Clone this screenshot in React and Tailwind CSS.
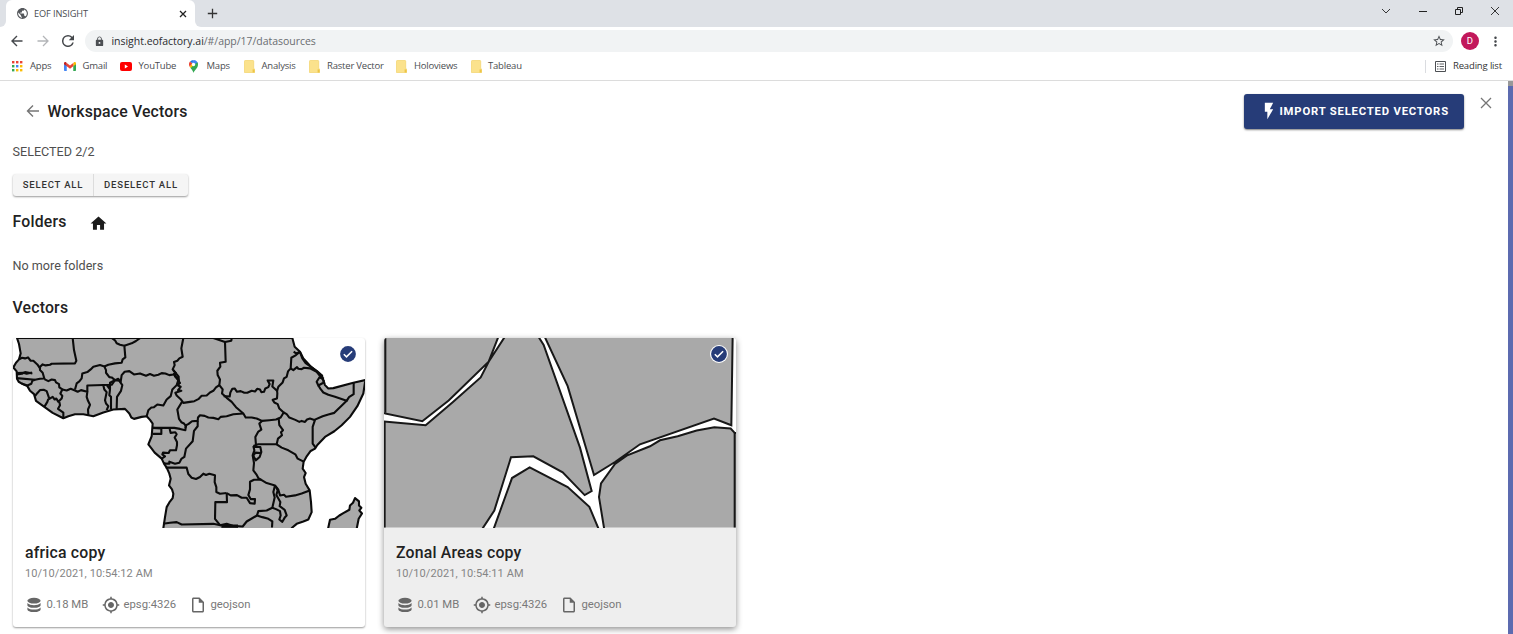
import React from "react";
import {
  MdHome, MdFlashOn, MdLock,
  MdStarBorder, MdMoreVert, MdMyLocation, MdOutlineInsertDriveFile, MdPublic,
} from "react-icons/md";

const AFRICA_BORDERS = [
  "57,88 66,83 75,85 84,82 92,92 100,92 112,103 118,112 128,103 137,106 150,104 155,101 225,100 229,92 222,60 218,24",
  "120,110 120,120 128,128 133,145 120,146 105,149 50,144",
  "50,133 66,131 75,126 87,128 97,130",
  "50,129 70,128 80,131 96,127",
  "105,149 97,152 94,161 82,166 65,160",
  "133,147 145,153 155,148 165,150 168,157 177,162 178,172 187,178 181,190 187,197 185,205 175,215 169,205 164,208 158,200 148,206 145,197 140,183 131,179 120,180 111,190 105,198",
  "145,206 142,215 133,230",
  "178,215 180,225 174,236 190,247 190,262",
  "187,178 200,181 212,176 225,181 233,185 243,180 262,185 260,200 264,212 270,224 264,238 265,254",
  "225,178 230,160 238,154 245,145 247,130 262,126 272,118 280,110 300,105 313,109 318,120 318,128 328,141 335,142 345,150 335,164 262,166 262,185",
  "313,109 325,104 345,100 365,98 368,88 376,82 373,47 360,44 350,40 345,31 335,24",
  "373,47 395,40 408,33 421,24",
  "310,166 313,178 320,186 315,210 318,220 325,228 320,240",
  "321,166 330,178 328,195 333,200 333,238",
  "330,178 330,158 345,150 358,152 367,165 363,182 351,200 350,236",
  "345,150 355,146 362,155 365,135 374,125 388,123 402,133 420,130 438,137 450,132 462,137 475,134 485,129 496,130 508,135 520,133 530,128",
  "550,24 544,55 548,80 538,85 532,92 522,96 524,105 518,118 526,128 525,138 534,145 540,162",
  "520,120 536,140 536,152 527,141 520,130",
  "535,150 530,165 517,178 512,198 500,208 490,226 472,223 462,231 454,232 445,240 440,258",
  "540,155 534,166 542,170 534,180 544,182 526,188 530,196 542,207 550,218 570,215 583,213 595,207 605,197 620,196 630,187 640,182 648,172 658,165",
  "546,215 532,238 537,266 544,276 552,280 558,288 555,293",
  "458,293 505,293 523,293 540,296 556,300 558,285 566,281 576,273 593,272 594,262 600,255 614,257 625,262 640,263 655,267 662,260 680,258 700,252 730,250",
  "458,293 484,295 484,311 458,311",
  "509,296 512,308 526,306 530,312 524,322 531,335 531,345 528,360 510,360 506,368 489,367 487,372 495,378 484,386",
  "490,398 500,400 508,400 508,394 525,400 538,397 544,386 553,380 558,355 578,333 582,302 593,288 593,272",
  "497,412 560,412 565,431 575,442 588,446 600,440 610,430 618,434 628,430 645,435 644,455 649,470 649,485 660,490 680,488",
  "489,580 510,577 530,575 545,582 640,580 665,585",
  "640,24 675,36 694,32 695,24",
  "675,36 677,95 660,98 661,110 652,122 653,135 660,148 658,165 668,178 666,190 680,203 695,215 708,231 730,250 737,262 755,262 770,265 786,272 808,270 828,268 842,262 851,247 838,235 833,222 823,217 818,209 831,205 832,190 831,178",
  "671,198 689,199 691,187 697,176 704,175 711,185 722,183 733,188 742,188 755,182 765,184 772,176 780,178 784,186 792,185 796,175 805,171 809,162 803,151 820,151 817,169 831,182 835,170 848,157 852,145 860,140 864,124 872,115 874,83 888,75 900,65",
  "872,115 880,120 891,111 895,116 905,117 912,113 930,115 950,125 970,150",
  "881,65 888,70 900,66 907,85 917,99 930,108 950,122 968,138",
  "851,247 860,252 868,262 886,269 898,275 905,272 915,275 921,268 930,265 943,269 968,258 985,253 1003,248 1040,212",
  "972,146 958,142 950,155 955,166 970,158 971,149",
  "955,166 962,177 970,187 985,194 1005,200 1040,212 1047,201 1061,192 1061,159",
  "945,269 938,290 938,340 947,352",
  "836,265 838,285 849,300 843,306 846,315 834,325 830,342 775,342 760,347",
  "786,272 778,280 784,298 775,304 766,320 768,345",
  "830,342 845,352 865,360 886,372 893,385 911,394",
  "760,347 763,360 758,375 762,398 760,420 769,432 775,443 782,448 762,448 750,454 750,477 745,494 752,506 765,506 764,520 750,518 740,502 725,502 711,494 692,495 680,488",
  "761,350 781,350 784,365 779,380 767,390 760,376 766,367 784,368",
  "780,446 800,458 825,465 835,478 840,495 852,493 858,499 885,495 905,489 929,480",
  "825,465 820,485 824,501 817,532 800,540 775,542 771,555",
  "828,470 833,480 829,494 841,515 839,527 854,538 860,555 855,560 847,574 838,567 842,555 840,542 828,536 817,532",
  "680,488 681,515 646,515 645,565 660,584 680,580 698,586 728,588 740,573 771,555 787,560 805,565 817,573 816,591",
];

const AFRICA_LAND =
  "51,24 57,42 62,70 57,88 48,98 40,112 50,124 51,146 56,155 68,162 82,168 90,182 102,192 108,212 134,231 158,248 190,264 205,258 225,252 250,252 280,258 310,247 340,238 375,236 388,250 394,262 402,266 425,260 440,258 450,269 458,280 455,318 445,342 455,355 464,367 485,385 492,400 500,412 508,430 512,445 507,465 516,477 520,490 518,503 508,516 500,530 495,560 489,600 870,600 877,591 890,580 910,573 925,567 935,545 933,515 929,480 917,460 912,440 917,428 908,415 911,394 919,380 932,362 945,355 952,344 975,320 1003,303 1025,285 1050,260 1072,228 1090,190 1096,150 1060,158 1000,174 985,175 975,165 967,140 950,124 935,112 910,85 900,65 884,50 877,24";

function AfricaMap() {
  return (
    <svg viewBox="39 24 1056 567" preserveAspectRatio="none" className="block h-[189.5px] w-full">
      <g stroke="#0b0b0b" strokeWidth="6.3" strokeLinejoin="round">
        <polygon points={AFRICA_LAND} fill="#a9a9a9" />
        <polygon points="983,600 990,568 1005,565 1018,555 1030,548 1048,538 1050,525 1059,517 1065,503 1077,513 1077,525 1084,532 1078,540 1086,549 1076,565 1069,600" fill="#a9a9a9" />
        {AFRICA_BORDERS.map((points) => (
          <polyline key={points} points={points} fill="none" />
        ))}
        <path d="M664 587H714" strokeWidth="10" />
      </g>
    </svg>
  );
}

function ZonesMap() {
  return (
    <svg viewBox="12 24 1056 567" preserveAspectRatio="none" className="block h-[189.5px] w-full">
      <rect x="12" y="24" width="1056" height="567" fill="#a9a9a9" />
      <g fill="#fff" stroke="#181818" strokeWidth="6">
        <path d="M5 248 L127 273 L206 211 L326 95 L356 18 L376 18 L326 95 L302 142 L218 216 L137 285 L5 273 Z" />
        <path d="M474 18 L491 45 L600 352 L635 482 L614 494 L548 426 L460 378 L393 381 L343 540 L305 598 L340 598 L396 443 L449 411 L563 470 L628 529 L657 598 L673 598 L657 500 L663 459 L705 401 L740 376 L810 348 L840 330 L893 318 L950 301 L1003 291 L1052 295 L1064 308 L1080 310 L1080 18 L1058 18 L1054 285 L1002 265 L780 342 L705 395 L642 434 L563 168 L493 18 Z" />
        <path d="M16 24V248M14 273V591M1064 308V591" fill="none" />
      </g>
      <path d="M12 253 L14 253 L14 269 L12 269Z" fill="#fff" />
      <path d="M1062 24 H1068 V304 L1062 298 Z" fill="#fff" />
    </svg>
  );
}

function DatabaseIcon() {
  return (
    <svg viewBox="0 0 18 18" className="mr-[3.500px] size-[18px] text-[#666]" fill="currentColor">
      <ellipse cx="9" cy="4.700" rx="6.600" ry="2.900" />
      <path d="M2.400 7.100c1.500 1.700 4 2.100 6.600 2.100s5.100-.4 6.600-2.100v2.100c0 1.500-3 2.600-6.600 2.600s-6.600-1.100-6.600-2.600Z" />
      <path d="M2.400 11.400c1.500 1.700 4 2.100 6.600 2.100s5.100-.4 6.600-2.100v2.100c0 1.500-3 2.600-6.600 2.600s-6.600-1.100-6.600-2.600Z" />
    </svg>
  );
}

function Meta({ icon, className, children }) {
  return (
    <div className={`flex items-center text-[11.3px] text-[#797979] ${className}`}>
      {icon}
      <span className="pt-[1px]">{children}</span>
    </div>
  );
}

function VectorCard({ map, title, date, size, active }) {
  return (
    <article
      className={
        active
          ? "relative h-[289px] w-[352px] overflow-hidden rounded-[3px] bg-[#eeeeee] shadow-[0_2px_6px_rgba(0,0,0,0.45)]"
          : "relative h-[289px] w-[352px] overflow-hidden rounded-[3px] bg-white shadow-[0_1px_2px_rgba(0,0,0,0.4)]"
      }
    >
      {map}
      <svg viewBox="0 0 18 18" className="absolute top-[7px] right-[7.500px] size-[18px]">
        <circle cx="9" cy="9" r="9" fill="#fff" />
        <circle cx="9" cy="9" r="7.900" fill="#263c78" />
        <path d="m4.800 9.200 2.700 2.700 5.600-5.700" fill="none" stroke="#fff" strokeWidth="1.500" />
      </svg>
      <div className="px-[12.500px] pt-[15.500px]">
        <h3 className="h-5 text-[15.8px] leading-5 font-medium tracking-[0.2px] text-[#222]">{title}</h3>
        <p className="mt-[2.500px] h-4 text-[11px] leading-4 tracking-[0.1px] text-[#858585]">{date}</p>
        <div className="mt-[14px] flex h-[18px] items-center">
          <Meta className="w-[76.500px]" icon={<DatabaseIcon />}>{size}</Meta>
          <Meta className="w-[87px]" icon={<MdMyLocation className="mr-[4px] size-[18px] text-[#666]" />}>epsg:4326</Meta>
          <Meta className="" icon={<MdOutlineInsertDriveFile className="mr-[4px] size-[18px] text-[#666]" />}>geojson</Meta>
        </div>
      </div>
    </article>
  );
}

function FolderIcon() {
  return (
    <svg viewBox="0 0 11 13" className="h-[13px] w-[11px]">
      <path d="M.5 1.200Q.5.5 1.200.5H9q.7 0 .7.7v7l1 1v3.300H.5Z" fill="#fbe28c" stroke="#f2d269" strokeWidth=".7" />
      <path d="M8.600 12.500V9.400h2v3.100Z" fill="#edc546" />
    </svg>
  );
}

function AppsIcon() {
  const colors = ["#ea4335", "#ea4335", "#ea4335", "#34a853", "#4285f4", "#fbbc04", "#34a853", "#fbbc04", "#fbbc04"];
  return (
    <svg viewBox="0 0 11 11" className="size-[11px]">
      {colors.map((c, i) => (
        <rect key={i} x={(i % 3) * 4} y={Math.floor(i / 3) * 4} width="2.400" height="2.400" fill={c} />
      ))}
    </svg>
  );
}

function GmailIcon() {
  return (
    <svg viewBox="0 0 24 18" className="h-[9px] w-[12px]">
      <path d="M0 3V16.500q0 1.500 1.600 1.500H5.500V7Z" fill="#4285f4" />
      <path d="M24 3V16.500q0 1.500-1.600 1.500H18.500V7Z" fill="#34a853" />
      <path d="M18.500 2v6.500L24 4.400V2.200c0-2-2.300-3-4-1.700Z" fill="#fbbc04" />
      <path d="M5.500 8.500V2L12 6.900 18.500 2v6.500L12 13.400Z" fill="#ea4335" />
      <path d="M0 2.200v2.200l5.500 4.100V2L4 .5C2.300-.8 0 .2 0 2.200Z" fill="#c5221f" />
    </svg>
  );
}

function YouTubeIcon() {
  return (
    <svg viewBox="0 0 12 9" className="h-[9px] w-[12px]">
      <rect width="12" height="9" rx="2" fill="#f00" />
      <path d="M4.800 2.600 8 4.500 4.800 6.400Z" fill="#fff" />
    </svg>
  );
}

function MapsIcon() {
  return (
    <svg viewBox="0 0 18 26" className="h-[13px] w-[9px]">
      <path d="M9 0a9 9 0 0 0-6.900 3.200L6.500 7Z" fill="#1a73e8" />
      <path d="M9 0C14 0 18 4 18 9H12L6 7 9 0Z" fill="#4285f4" />
      <path d="M2.100 3.200A9 9 0 0 0 1.300 13.500L7 7.500Z" fill="#ea4335" />
      <path d="M1.300 13.500 3 16 11.500 11.300 6 7.500Z" fill="#fbbc04" />
      <path d="M3 16c3 4 5 6 6 10 1-5 9-9 9-17 0-2-.5-3.300-1.300-4.700Z" fill="#34a853" />
      <circle cx="9" cy="9" r="3.300" fill="#fff" />
    </svg>
  );
}

const BOOKMARKS = [
  { label: "Apps", icon: <AppsIcon />, cell: "w-[52px]", gap: "w-[18px]" },
  { label: "Gmail", icon: <GmailIcon />, cell: "w-[56px]", gap: "w-[18.500px]" },
  { label: "YouTube", icon: <YouTubeIcon />, cell: "w-[69px]", gap: "w-[18.500px]" },
  { label: "Maps", icon: <MapsIcon />, cell: "w-[55px]", gap: "w-[17.500px]" },
  { label: "Analysis", icon: <FolderIcon />, cell: "w-[65px]", gap: "w-[17.500px]" },
  { label: "Raster Vector", icon: <FolderIcon />, cell: "w-[87px]", gap: "w-[18px]" },
  { label: "Holoviews", icon: <FolderIcon />, cell: "w-[75px]", gap: "w-[18px]" },
  { label: "Tableau", icon: <FolderIcon />, cell: "w-[60px]", gap: "w-[17px]" },
];

function BrowserChrome() {
  return (
    <header className="font-['Open_Sans','Noto_Sans',sans-serif] text-[#4a4d51]">
      <div className="flex h-[27px] items-end bg-[#dee1e6]">
        <div className="h-full w-[6px] bg-white"><div className="h-full rounded-br-[6px] bg-[#dee1e6]" /></div>
        <div className="flex h-[27px] w-[189px] items-center rounded-t-[6px] bg-white pr-[8.500px] pl-[9.500px]">
          <MdPublic className="size-[13px] text-[#55585c]" />
          <span className="ml-[5.500px] flex-1 text-[9.200px] tracking-[-0.1px]">EOF INSIGHT</span>
          <svg viewBox="0 0 8 8" className="size-[8px]" stroke="#222" strokeWidth="1.300"><path d="m1 1 6 6M7 1 1 7" /></svg>
        </div>
        <div className="h-full w-[6px] bg-white"><div className="h-full rounded-bl-[6px] bg-[#dee1e6]" /></div>
        <div className="flex h-full flex-1 items-center pl-[6px]">
          <svg viewBox="0 0 11 11" className="size-[11px]" stroke="#333" strokeWidth="1.300"><path d="M5.500.8v9.400M.8 5.500h9.400" /></svg>
        </div>
        <div className="flex h-full items-start pt-[6px] pr-[13px] text-[#222]">
          <svg viewBox="0 0 10 10" className="mr-[27px] size-[10px]" fill="none" stroke="currentColor"><path d="m1 3 4 4 4-4" strokeWidth=".9" /></svg>
          <svg viewBox="0 0 10 10" className="mr-[26px] size-[10px]" stroke="currentColor"><path d="M1 5.500h8" /></svg>
          <svg viewBox="0 0 10 10" className="mr-[26px] size-[10px]" fill="none" stroke="currentColor"><path d="M1.500 3.500h5v5h-5zM3.500 3V1.500h5v5H7" /></svg>
          <svg viewBox="0 0 10 10" className="size-[10px]" stroke="currentColor"><path d="m1 1 8 8M9 1 1 9" strokeWidth=".9" /></svg>
        </div>
      </div>
      <div className="flex h-[28px] items-center bg-white pl-[11px]">
        <svg viewBox="0 0 12 12" className="size-[12px]" fill="none" stroke="#45484c" strokeWidth="1.400"><path d="M11.500 6H1M6 1 1 6l5 5" /></svg>
        <svg viewBox="0 0 12 12" className="ml-[13.500px] size-[12px]" fill="none" stroke="#b3b5b8" strokeWidth="1.300"><path d="M.5 6H11M6 1l5 5-5 5" /></svg>
        <svg viewBox="4 4 16 16" className="ml-[13px] size-[12px]" fill="#45484c"><path d="M17.650 6.350A7.960 7.960 0 0 0 12 4a8 8 0 1 0 7.730 10h-2.080A6 6 0 1 1 12 6c1.660 0 3.140.69 4.220 1.780L13 11h7V4z" /></svg>
        <div className="ml-[11px] flex h-[22px] w-[1368px] items-center rounded-full bg-[#f1f3f4] pr-[7px] pl-[9px]">
          <MdLock className="size-[11px] text-[#4c4f53]" />
          <span className="mt-[1px] ml-[7px] flex-1 text-[10.500px] tracking-[-0.03px] text-[#6a6d71]">
            <span className="text-[#2a2c2f]">insight.eofactory.ai</span>/#/app/17/datasources
          </span>
          <MdStarBorder className="size-[14px] text-[#4c4f53]" />
        </div>
        <span className="ml-[8.500px] flex size-[17.500px] items-center justify-center rounded-full bg-[#c2185b] font-[Roboto,sans-serif] text-[9.500px] text-white">D</span>
        <MdMoreVert className="ml-[9px] size-[15px] text-[#45484c]" />
      </div>
      <nav className="flex h-[26px] items-center border-b border-[#dcdcdc] bg-white pb-[3px] pl-[12px] text-[9.500px]">
        {BOOKMARKS.map((b) => (
          <div key={b.label} className={`flex shrink-0 items-center ${b.cell}`}>
            <span className={`flex shrink-0 items-center ${b.gap}`}>{b.icon}</span>
            <span className="tracking-[-0.2px] whitespace-nowrap">{b.label}</span>
          </div>
        ))}
        <div className="ml-auto flex items-center pr-[11px]">
          <span className="h-[13px] w-px bg-[#dadce0]" />
          <svg viewBox="0 0 11 11" className="ml-[9px] size-[11px]" fill="none" stroke="#4c4f53"><path d="M.5.5h10v10H.5z" /><path d="M2 3h1.500M4.500 3H9M2 5.500h1.500M4.500 5.500H9M2 8h1.500M4.500 8H9" strokeWidth=".9" /></svg>
          <span className="ml-[7px] tracking-[-0.15px] text-[#333]">Reading list</span>
        </div>
      </nav>
    </header>
  );
}

export default function App() {
  return (
    <div className="flex h-[634px] w-full flex-col overflow-hidden bg-white">
      <BrowserChrome />
      <div className="flex min-h-0 flex-1 font-[Roboto,sans-serif]">
        <main className="min-w-0 flex-1 pl-[12.500px]">
          <div className="flex h-[58px] items-start">
            <svg viewBox="0 0 14 14" className="mt-[23px] ml-[13.500px] size-[14px]" fill="none" stroke="#757575" strokeWidth="1.400"><path d="M13 7H1.500M7 1.500 1.500 7 7 12.500" /></svg>
            <h1 className="mt-[21px] ml-[7.500px] text-[15.800px] leading-5 font-medium tracking-[0.180px] text-[#222]">Workspace Vectors</h1>
            <button className="mt-[13px] ml-auto flex h-[34.500px] w-[220px] items-center rounded-[3px] bg-[#263c78] pl-[15px] text-[11.300px] font-bold tracking-[0.800px] text-white shadow-[0_1px_2px_rgba(0,0,0,0.5)]">
              <MdFlashOn className="size-[20px] shrink-0" />
              <span className="ml-[1px] pt-[2px] whitespace-nowrap">IMPORT SELECTED VECTORS</span>
            </button>
            <svg viewBox="0 0 12 12" className="mt-[16px] mr-[16.500px] ml-[16px] size-[12px]" fill="none" stroke="#757575" strokeWidth="1.300"><path d="m1 1 10 10M11 1 1 11" /></svg>
          </div>
          <p className="mt-[3px] h-5 text-[12.600px] leading-5 text-[#4f4f4f]">SELECTED 2/2</p>
          <div className="mt-[11.500px] flex h-[22.500px] w-[175px] rounded-[3px] bg-[#f5f5f5] text-[9.500px] font-medium tracking-[0.850px] text-[#333] shadow-[0_1px_2px_rgba(0,0,0,0.4)]">
            <button className="w-[81px] border-r border-[#dcdcdc] pl-[1px]">SELECT ALL</button>
            <button className="flex-1 pl-[1px]">DESELECT ALL</button>
          </div>
          <div className="mt-[16px] flex h-5 items-center">
            <h2 className="w-[76px] text-[15.800px] leading-5 font-medium tracking-[0.200px] text-[#222]">Folders</h2>
            <MdHome className="mt-[3px] size-[19px] text-[#1c1c1c]" />
          </div>
          <p className="mt-[23.500px] h-5 text-[12.600px] leading-5 text-[#4f4f4f]">No more folders</p>
          <h2 className="mt-[22px] h-5 text-[15.800px] leading-5 font-medium tracking-[0.200px] text-[#222]">Vectors</h2>
          <div className="mt-[20.500px] flex gap-[19px]">
            <VectorCard map={<AfricaMap />} title="africa copy" date="10/10/2021, 10:54:12 AM" size="0.18 MB" />
            <VectorCard map={<ZonesMap />} title="Zonal Areas copy" date="10/10/2021, 10:54:11 AM" size="0.01 MB" active />
          </div>
        </main>
        <div className="w-[5px] bg-[#5c6bb0]"><div className="h-[5px] bg-[#999]" /></div>
      </div>
    </div>
  );
}
